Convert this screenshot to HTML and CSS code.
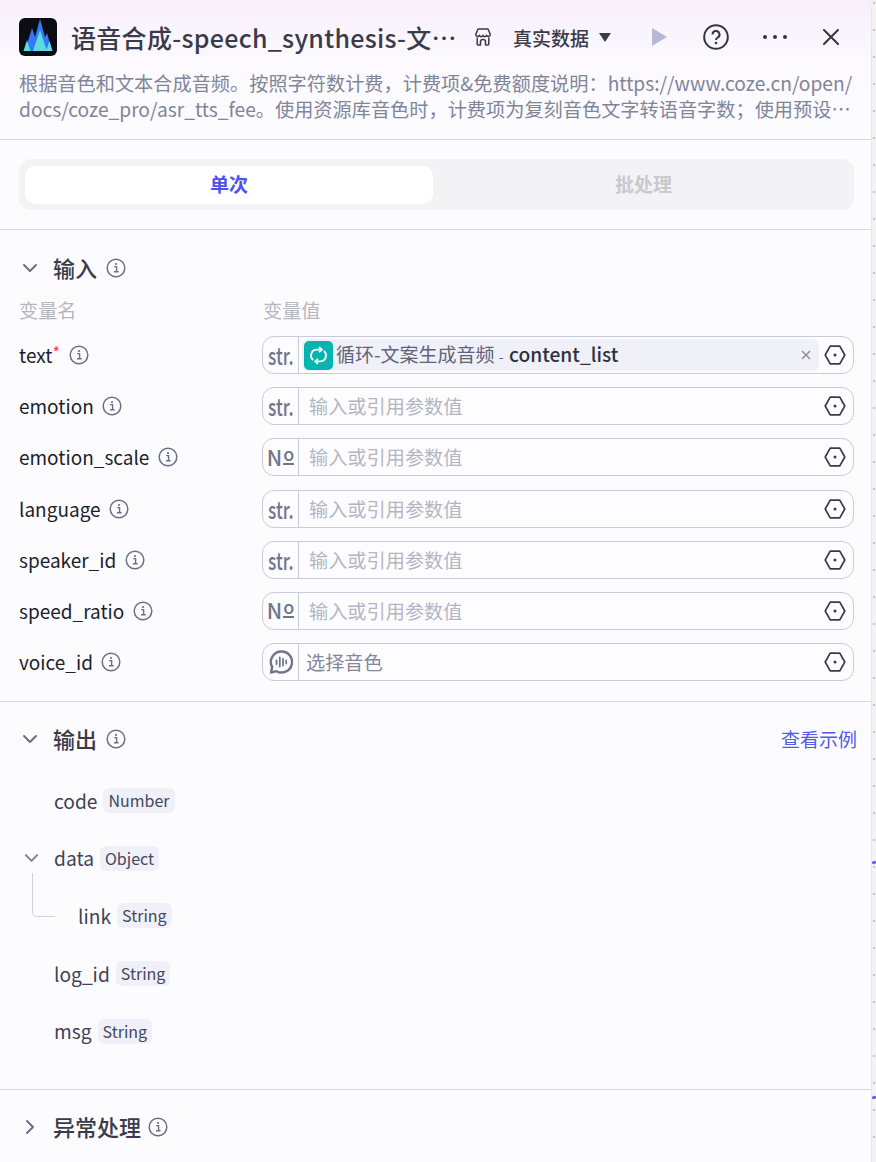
FILE: index.html
```html
<!DOCTYPE html>
<html lang="zh-CN">
<head>
<meta charset="utf-8">
<title>语音合成</title>
<link rel="stylesheet" href="styles.css">
</head>
<body>
<svg class="defs" width="0" height="0" aria-hidden="true">
  <symbol id="info" viewBox="0 0 20 20">
    <circle cx="10" cy="10" r="8.800" fill="none" stroke="currentColor" stroke-width="1.500"/>
    <path d="M8.200 8.600h2.400v5M8 13.800h4.600" fill="none" stroke="currentColor" stroke-width="1.400"/>
    <circle cx="10" cy="6" r="1.100" fill="currentColor"/>
  </symbol>
  <symbol id="hex" viewBox="0 0 22 20">
    <path d="M6.200 1.200h9.600L20.800 10l-5 8.800H6.200L1.200 10z" fill="none" stroke="currentColor" stroke-width="1.700" stroke-linejoin="round"/>
    <circle cx="11" cy="10" r="1.500" fill="currentColor"/>
  </symbol>
  <symbol id="down" viewBox="0 0 16 10">
    <path d="M2 2l6 6 6-6" fill="none" stroke="currentColor" stroke-width="2" stroke-linecap="round" stroke-linejoin="round"/>
  </symbol>
</svg>
<div class="stage">
  <main class="panel">
    <header class="head">
      <div class="title-row">
        <svg class="logo" viewBox="0 0 38 38">
          <rect width="38" height="38" rx="6" fill="#0b0d12"/>
          <path d="M6 33l7-23 3 9 5-18 5 18 2-4 5 18z" fill="#3478f6"/>
          <path d="M4.500 33l3.500-11 3.500 11zM14 33l7-21 7 21zM27 33l3.500-10 3 10z" fill="#5ddcdc"/>
        </svg>
        <h1 class="title">语音合成-speech_synthesis-文案生成音频</h1>
        <svg class="store" viewBox="0 0 16 18">
          <path d="M3 1h10l2.200 5.200c.3 2.300-2.800 3-3.700 1-.7 1.900-2.800 1.900-3.500 0-.7 1.900-2.800 1.900-3.500 0-.9 2-4 1.300-3.700-1zM2.200 9.500V16a1 1 0 0 0 1 1h2.300v-3.500c0-2.800 5-2.800 5 0V17h2.300a1 1 0 0 0 1-1V9.500" fill="none" stroke="currentColor" stroke-width="1.500" stroke-linejoin="round"/>
        </svg>
        <span class="mode">真实数据</span>
        <span class="caret"></span>
        <span class="play"></span>
        <svg class="help" viewBox="0 0 26 26">
          <circle cx="13" cy="13" r="11.800" fill="none" stroke="currentColor" stroke-width="2"/>
          <path d="M9.500 10.500a3.500 3.500 0 1 1 5.200 3c-1.200.7-1.700 1.300-1.700 2.400" fill="none" stroke="currentColor" stroke-width="2"/>
          <circle cx="13" cy="19" r="1.300" fill="currentColor"/>
        </svg>
        <span class="dots"><i></i><i></i><i></i></span>
        <svg class="close" viewBox="0 0 16 16">
          <path d="M1 1l14 14M15 1L1 15" fill="none" stroke="currentColor" stroke-width="2" stroke-linecap="round"/>
        </svg>
      </div>
      <p class="desc">根据音色和文本合成音频。按照字符数计费，计费项&amp;免费额度说明：https://www.coze.cn/open/<wbr>docs/coze_pro/asr_tts_fee。使用资源库音色时，计费项为复刻音色文字转语音字数；使用预设音色时，计费项为语音合成字数。</p>
    </header>

    <section class="tabs-wrap">
      <div class="tabs">
        <div class="tab active">单次</div>
        <div class="tab">批处理</div>
      </div>
    </section>

    <section class="input-sec">
      <div class="sec-head">
        <svg class="chev"><use href="#down"/></svg>
        <span class="sec-title">输入</span>
        <svg class="info"><use href="#info"/></svg>
      </div>
      <div class="cols"><span class="col-name">变量名</span><span>变量值</span></div>

      <div class="row">
        <div class="name">text<em>*</em><svg class="info"><use href="#info"/></svg></div>
        <div class="field">
          <span class="type"><span class="type-text">str.</span></span>
          <div class="ref">
            <span class="loop"><svg viewBox="0 0 20 20"><path d="M5 14.200a5.500 5.500 0 0 1 3-9.800h5M10.500 2l2.600 2.400-2.600 2.400M15 5.800a5.500 5.500 0 0 1-3 9.800H7M9.500 18l-2.600-2.400 2.600-2.400" fill="none" stroke="#fff" stroke-width="1.800"/></svg></span>
            <span class="ref-text">循环-文案生成音频 <small>-</small> <b>content_list</b></span>
            <svg class="x" viewBox="0 0 10 10"><path d="M1 1l8 8M9 1L1 9" fill="none" stroke="currentColor" stroke-width="1.300"/></svg>
          </div>
          <svg class="hex"><use href="#hex"/></svg>
        </div>
      </div>
      <div class="row">
        <div class="name">emotion<svg class="info"><use href="#info"/></svg></div>
        <div class="field"><span class="type"><span class="type-text">str.</span></span><span class="ph">输入或引用参数值</span><svg class="hex"><use href="#hex"/></svg></div>
      </div>
      <div class="row">
        <div class="name">emotion_scale<svg class="info"><use href="#info"/></svg></div>
        <div class="field"><span class="type"><span class="type-num">N<span class="ord">o</span></span></span><span class="ph">输入或引用参数值</span><svg class="hex"><use href="#hex"/></svg></div>
      </div>
      <div class="row">
        <div class="name">language<svg class="info"><use href="#info"/></svg></div>
        <div class="field"><span class="type"><span class="type-text">str.</span></span><span class="ph">输入或引用参数值</span><svg class="hex"><use href="#hex"/></svg></div>
      </div>
      <div class="row">
        <div class="name">speaker_id<svg class="info"><use href="#info"/></svg></div>
        <div class="field"><span class="type"><span class="type-text">str.</span></span><span class="ph">输入或引用参数值</span><svg class="hex"><use href="#hex"/></svg></div>
      </div>
      <div class="row">
        <div class="name">speed_ratio<svg class="info"><use href="#info"/></svg></div>
        <div class="field"><span class="type"><span class="type-num">N<span class="ord">o</span></span></span><span class="ph">输入或引用参数值</span><svg class="hex"><use href="#hex"/></svg></div>
      </div>
      <div class="row">
        <div class="name">voice_id<svg class="info"><use href="#info"/></svg></div>
        <div class="field">
          <span class="type">
            <svg class="voice" viewBox="0 0 24 24"><path d="M12.500 1.500a10.500 10.500 0 1 1-5 19.700L2 22.500l1.200-5.400A10.500 10.500 0 0 1 12.500 1.500z" fill="none" stroke="currentColor" stroke-width="2.400" stroke-linejoin="round"/><path d="M7.500 10.500v3.500M10.800 7.500v9M14 9v6.500M17.200 10.500v3" fill="none" stroke="currentColor" stroke-width="1.800" stroke-linecap="round"/></svg>
          </span>
          <span class="ph voice-ph">选择音色</span>
          <svg class="hex"><use href="#hex"/></svg>
        </div>
      </div>
    </section>

    <section class="output-sec">
      <div class="sec-head">
        <svg class="chev"><use href="#down"/></svg>
        <span class="sec-title">输出</span>
        <svg class="info"><use href="#info"/></svg>
        <a class="example">查看示例</a>
      </div>
      <div class="tree">
        <div class="leaf"><span class="key">code</span><span class="tag">Number</span></div>
        <div class="leaf"><svg class="mini"><use href="#down"/></svg><span class="key">data</span><span class="tag">Object</span></div>
        <div class="leaf child"><span class="elbow"></span><span class="key">link</span><span class="tag">String</span></div>
        <div class="leaf"><span class="key">log_id</span><span class="tag">String</span></div>
        <div class="leaf"><span class="key">msg</span><span class="tag">String</span></div>
      </div>
    </section>

    <section class="error-sec">
      <div class="sec-head">
        <svg class="chev right" viewBox="0 0 10 16"><path d="M2 2l6 6-6 6" fill="none" stroke="currentColor" stroke-width="2" stroke-linecap="round" stroke-linejoin="round"/></svg>
        <span class="sec-title">异常处理</span>
        <svg class="info"><use href="#info"/></svg>
      </div>
    </section>
  </main>
  <aside class="canvas">
    <span class="wire w1"></span>
    <span class="wire w2"></span>
  </aside>
</div>
</body>
</html>
```
FILE: styles.css
```css
* { box-sizing: border-box; }
html, body { margin: 0; height: 100%; }
body {
  width: 876px;
  height: 1162px;
  overflow: hidden;
  background: #f3f3f5;
  font-family: "Noto Sans CJK SC", "Noto Sans", sans-serif;
  color: #1c1f2b;
}
.defs { position: absolute; }
.stage { display: flex; height: 1162px; }
.panel {
  width: 872px;
  height: 1162px;
  background: #fcfcff;
  border-right: 1px solid #e6e6ea;
  border-radius: 0 10px 0 0;
  overflow: hidden;
  flex: none;
}
.canvas {
  flex: 1;
  position: relative;
  background-image: radial-gradient(circle at 2px 3px, #c5c6cc 0.8px, transparent 1.1px);
  background-size: 4px 27px;
  background-repeat: repeat-y;
}
.wire { position: absolute; left: 0; width: 4px; height: 3px; background: #5a5cf0; border-radius: 2px; transform: rotate(-12deg); }
.w1 { top: 861px; }
.w2 { top: 1096px; }

.head {
  height: 140px;
  padding: 17px 17px 0 19px;
  background: linear-gradient(180deg, #f8f0fc 0%, #fcfaff 50%, #fcfcff 100%);
  border-bottom: 1px solid #d6d6e2;
}
.title-row { display: flex; align-items: center; height: 39px; }
.logo { width: 38px; height: 38px; flex: none; }
.title {
  margin: 0 0 0 14px;
  width: 387px;
  flex: none;
  font-size: 25px;
  font-weight: 500;
  letter-spacing: 0.3px;
  line-height: 38px;
  color: #3a3b4a;
  white-space: nowrap;
  overflow: hidden;
  text-overflow: ellipsis;
}
.store { width: 16px; height: 18px; margin-left: 17px; color: #3a3b46; flex: none; }
.mode { margin: 2px 0 0 22px; font-size: 19px; font-weight: 500; color: #3a3b46; line-height: 24px; white-space: nowrap; }
.caret { width: 0; height: 0; margin-left: 10px; margin-top: 2px; border: 6px solid transparent; border-top: 9px solid #3a3b46; border-bottom: 0; }
.play { width: 0; height: 0; margin-left: 41px; border-left: 15px solid #b7b8d4; border-top: 9px solid transparent; border-bottom: 9px solid transparent; }
.help { width: 26px; height: 26px; margin-left: 36px; color: #343541; flex: none; }
.dots { display: flex; gap: 6px; margin-left: 34px; }
.dots i { width: 4px; height: 4px; border-radius: 50%; background: #343541; }
.close { width: 16px; height: 16px; margin-left: 36px; color: #343541; flex: none; }
.desc {
  margin: 14px 0 0;
  font-size: 19.200px;
  line-height: 26px;
  color: #808598;
  display: -webkit-box;
  -webkit-box-orient: vertical;
  -webkit-line-clamp: 2;
  overflow: hidden;
}

.tabs-wrap { height: 90px; padding: 19px 17px 0 19px; border-bottom: 1px solid #d6d6e2; }
.tabs { display: flex; height: 51px; padding: 7px 0 6px 6px; background: #f3f3f6; border-radius: 12px; }
.tab { flex: 1; font-size: 19px; font-weight: 700; line-height: 36px; height: 38px; text-align: center; color: #c9c9d0; border-radius: 10px; }
.tab.active { flex: none; width: 408px; background: #fff; color: #4e51ee; }

.input-sec { height: 472px; padding: 18px 17px 0 19px; border-bottom: 1px solid #d6d6e2; }
.sec-head { display: flex; align-items: center; height: 39px; position: relative; }
.chev { width: 16px; height: 10px; margin-left: 3px; color: #6b6f86; flex: none; }
.chev.right { width: 10px; height: 16px; margin-left: 6px; }
.sec-title { margin: 0 0 2px 15px; font-size: 22px; font-weight: 500; color: #3a3b4a; line-height: 28px; }
.chev.right + .sec-title { margin-left: 18px; }
.chev.right ~ .info { margin-left: 7px; }
.info { width: 20px; height: 20px; margin-left: 9px; color: #6b6f86; flex: none; }
.cols { display: flex; font-size: 19.200px; line-height: 26px; color: #b5b6bf; margin-top: 10px; height: 39px; }
.col-name { width: 244px; }
.row { display: flex; align-items: center; height: 38px; margin-bottom: 13.200px; }
.name { width: 243px; display: flex; align-items: center; font-size: 19px; color: #1c1f2b; line-height: 28px; flex: none; }
.name em { color: #f93a4c; font-style: normal; font-size: 16px; align-self: flex-start; line-height: 22px; }
.name .info { margin-left: 8.500px; }
.name em + .info { margin-left: 9px; }
.field {
  flex: 1;
  height: 38px;
  display: flex;
  align-items: center;
  border: 1px solid #c9cadb;
  border-radius: 12px;
  background: #fdfdff;
}
.type {
  width: 36px;
  height: 100%;
  flex: none;
  display: flex;
  align-items: center;
  justify-content: center;
  color: #71758c;
  border-right: 1px solid #c9cadb;
}
.type-text { font-size: 24px; font-weight: 500; line-height: 30px; transform: scaleX(.72); }
.type-num { display: flex; align-items: flex-start; font-size: 21px; font-weight: 500; line-height: 21px; }
.ord { display: block; font-size: 18px; line-height: 9px; height: 16px; margin: 2px 0 0 1px; border-bottom: 2px solid currentColor; }
.voice { width: 24px; height: 24px; }
.ref {
  flex: 1;
  height: 32px;
  margin-left: 3px;
  display: flex;
  align-items: center;
  background: #f0f0f8;
  border-radius: 6px;
  padding: 0 6px 0 2px;
}
.loop { width: 29px; height: 29px; border-radius: 5px; background: #05b4b1; display: flex; align-items: center; justify-content: center; flex: none; }
.loop svg { width: 21px; height: 21px; }
.ref-text { margin-left: 3px; padding-bottom: 3px; flex: 1; font-size: 19px; color: #60647a; white-space: nowrap; }
.ref-text small { font-size: 14px; }
.ref-text b { font-weight: 500; font-size: 19.200px; color: #2f3140; margin-left: 1px; }
.x { width: 10px; height: 10px; color: #84869a; flex: none; margin-right: 2px; }
.hex { width: 22px; height: 20px; margin: 0 7px 0 auto; color: #3a3b4a; flex: none; }
.ref + .hex { margin-left: 5px; }
.ph { margin-left: 10px; font-size: 19.200px; color: #b3b5c2; }
.voice-ph { margin-left: 7px; color: #84869a; }

.output-sec { height: 388px; padding: 17px 14px 0 19px; border-bottom: 1px solid #d6d6e2; }
.example { margin-left: auto; font-size: 19px; color: #5558e8; }
.tree { padding-top: 28px; display: flex; flex-direction: column; gap: 28.700px; }
.leaf { display: flex; align-items: center; height: 29px; padding-left: 35px; position: relative; }
.leaf.child { padding-left: 59px; }
.key { font-size: 19.200px; line-height: 28px; color: #3f4256; }
.tag { margin-left: 6px; padding: 0 5px; height: 25px; font-size: 16px; line-height: 24px; color: #44475a; background: #f0f0f8; border-radius: 6px; }
.mini { position: absolute; left: 5px; top: 9px; width: 15px; height: 10px; color: #7a7e92; }
.elbow { position: absolute; left: 13px; top: -28px; width: 23px; height: 44px; border-left: 1px solid #d0d1dc; border-bottom: 1px solid #d0d1dc; border-bottom-left-radius: 5px; }

.error-sec { padding: 17px 14px 0 19px; }
```
